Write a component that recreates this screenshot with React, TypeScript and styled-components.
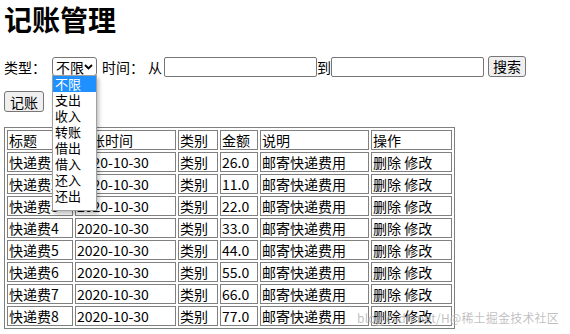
import React from 'react'
import styled, { createGlobalStyle } from 'styled-components'

const GlobalStyle = createGlobalStyle`
  body {
    margin: 0;
    background: #fff;
    color: #000;
    font-family: "Microsoft YaHei", "Noto Sans CJK SC", "Noto Sans", sans-serif;
    font-size: 14px;
  }
`

const Page = styled.div`
  position: relative;
  width: 570px;
  height: 334px;
  padding: 0 4px;
  box-sizing: border-box;
  overflow: hidden;
`

const Title = styled.h1`
  margin: 0;
  padding-top: 1px;
  font-size: 28px;
  line-height: 36px;
  font-weight: 700;
`

const FilterBar = styled.div`
  display: flex;
  align-items: center;
  height: 21px;
  margin-top: 19px;
  line-height: 16px;
`

const Label = styled.span<{ $gap?: number }>`
  margin-right: ${props => props.$gap || 0}px;
`

const SelectWrap = styled.div`
  position: relative;
  margin-right: 5px;
`

const SelectBox = styled.div`
  display: flex;
  align-items: center;
  justify-content: space-between;
  width: 45px;
  height: 19px;
  box-sizing: border-box;
  border: 1px solid #767676;
  border-radius: 3px;
  padding: 0 3px 0 3px;
  background: #fff;
`

const Popup = styled.ul`
  position: absolute;
  top: 18px;
  left: 0;
  width: 45px;
  box-sizing: border-box;
  margin: 0;
  padding: 0 0 6px 0;
  list-style: none;
  background: #fff;
  border: 1px solid #a0a0a0;
  box-shadow: 2px 3px 4px rgba(0, 0, 0, 0.25);
  z-index: 5;
`

const Option = styled.li<{ $active?: boolean }>`
  height: 16px;
  line-height: 16px;
  padding-left: 2px;
  font-size: 13px;
  background: ${props => (props.$active ? '#1e90ff' : 'transparent')};
  color: ${props => (props.$active ? '#fff' : '#000')};
`

const TextInput = styled.input<{ $left?: number }>`
  width: 153px;
  height: 20px;
  box-sizing: border-box;
  border: 1px solid #767676;
  border-radius: 2px;
  padding: 1px 2px;
  font: inherit;
  margin: 0 0 0 ${props => props.$left || 0}px;
`

const Button = styled.button`
  height: 21px;
  box-sizing: border-box;
  padding: 0 5px;
  font-family: inherit;
  font-size: 14px;
  line-height: 16px;
  background: #efefef;
  color: #000;
  border: 1px solid #767676;
  border-radius: 3px;
`

const SearchButton = styled(Button)`
  margin-left: 4px;
  margin-top: -1px;
  padding: 0 4px;
`

const AddRow = styled.div`
  margin-top: 14px;
  display: flex;
`

const Table = styled.table`
  margin-top: 15px;
  border: 1px solid #808080;
  border-spacing: 2px;
  line-height: 16px;
`

const Cell = styled.td<{ $w: number }>`
  box-sizing: border-box;
  width: ${props => props.$w}px;
  border: 1px solid #808080;
  padding: 1px 1px;
  text-align: left;
  font-weight: 400;
  white-space: nowrap;
  vertical-align: middle;
  height: 20px;
`

const Watermark = styled.div`
  position: absolute;
  right: 11px;
  bottom: 8px;
  font-size: 12px;
  color: rgba(150, 150, 150, 0.6);
  text-shadow: 0 0 1px rgba(255, 255, 255, 0.6);
  letter-spacing: 0.2px;
  pointer-events: none;
`

const widths = [66, 101, 40, 38, 109, 81]
const heads = ['标题', '记账时间', '类别', '金额', '说明', '操作']
const amounts = ['26.0', '11.0', '22.0', '33.0', '44.0', '55.0', '66.0', '77.0']
const options = ['不限', '支出', '收入', '转账', '借出', '借入', '还入', '还出']

const Chevron = () => (
  <svg width="9" height="6" viewBox="0 0 9 6">
    <path d="M1 1l3.5 3.5L8 1" fill="none" stroke="#000" strokeWidth="1.8" />
  </svg>
)

export default function App() {
  return (
    <Page>
      <GlobalStyle />
      <Title>记账管理</Title>
      <FilterBar>
        <Label $gap={6}>类型：</Label>
        <SelectWrap>
          <SelectBox>
            <span>不限</span>
            <Chevron />
          </SelectBox>
          <Popup>
            {options.map((o, i) => (
              <Option key={o} $active={i === 0}>
                {o}
              </Option>
            ))}
          </Popup>
        </SelectWrap>
        <Label $gap={4}>时间：</Label>
        <Label>从</Label>
        <TextInput $left={2} />
        <Label>到</Label>
        <TextInput />
        <SearchButton>搜索</SearchButton>
      </FilterBar>
      <AddRow>
        <Button>记账</Button>
      </AddRow>
      <Table>
        <tbody>
          <tr>
            {heads.map((h, i) => (
              <Cell as="th" key={h} $w={widths[i]}>
                {h}
              </Cell>
            ))}
          </tr>
          {amounts.map((a, r) => (
            <tr key={r}>
              <Cell $w={widths[0]}>快递费{r + 1}</Cell>
              <Cell $w={widths[1]}>2020-10-30</Cell>
              <Cell $w={widths[2]}>类别</Cell>
              <Cell $w={widths[3]}>{a}</Cell>
              <Cell $w={widths[4]}>邮寄快递费用</Cell>
              <Cell $w={widths[5]}>删除 修改</Cell>
            </tr>
          ))}
        </tbody>
      </Table>
      <Watermark>blog.csdn.net/H@稀土掘金技术社区</Watermark>
    </Page>
  )
}
